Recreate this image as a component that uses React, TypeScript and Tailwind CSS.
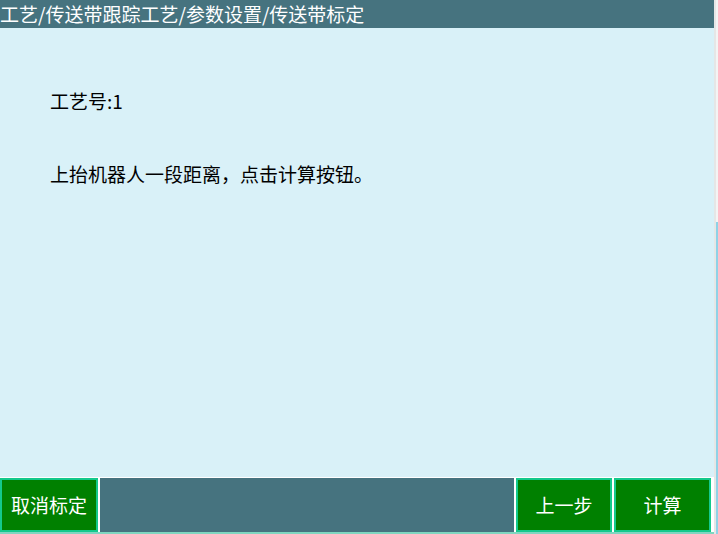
import React from 'react';

const font = { fontFamily: '"Microsoft YaHei", "Noto Sans CJK SC", sans-serif' };

function FooterButton({ label, width }: { label: string; width: string }) {
  return (
    <button
      className={`${width} h-full border-2 border-[#14c98c] bg-[#008000] text-[19px] text-white flex items-center justify-center`}
    >
      {label}
    </button>
  );
}

export default function App() {
  return (
    <div className="flex w-[718px] h-[534px] overflow-hidden bg-[#d9f1f8]" style={font}>
      <div className="flex flex-col w-[714px] h-full">
        {/* 标题栏 */}
        <div className="h-[28px] bg-[#46737f] text-white text-[19px] leading-[28px] whitespace-nowrap">
          工艺/传送带跟踪工艺/参数设置/传送带标定
        </div>

        {/* 内容 */}
        <div className="flex-1 pl-[50px] pt-[60px] text-[19px] text-black">
          <div className="leading-[26px]">工艺号:1</div>
          <div className="leading-[26px] mt-[47px]">上抬机器人一段距离，点击计算按钮。</div>
        </div>

        {/* 底部按钮 */}
        <div className="h-[57px] flex flex-col bg-white">
          <div className="h-[1px]" />
          <div className="flex h-[54px] gap-[2px] pr-[3px]">
            <FooterButton label="取消标定" width="w-[98px]" />
            <div className="flex-1 bg-[#46737f]" />
            <FooterButton label="上一步" width="w-[96px]" />
            <FooterButton label="计算" width="w-[97px]" />
          </div>
          <div className="h-[2px] bg-[#7fd6c0]" />
        </div>
      </div>

      {/* 右侧滚动条 */}
      <div className="w-[4px] h-full flex">
        <div className="w-[2px] h-full bg-[#e6e6e6]" />
        <div className="w-[2px] h-full flex flex-col">
          <div className="h-[222px] bg-[#f4f4f4]" />
          <div className="flex-1 bg-[#8fd2e6]" />
        </div>
      </div>
    </div>
  );
}
